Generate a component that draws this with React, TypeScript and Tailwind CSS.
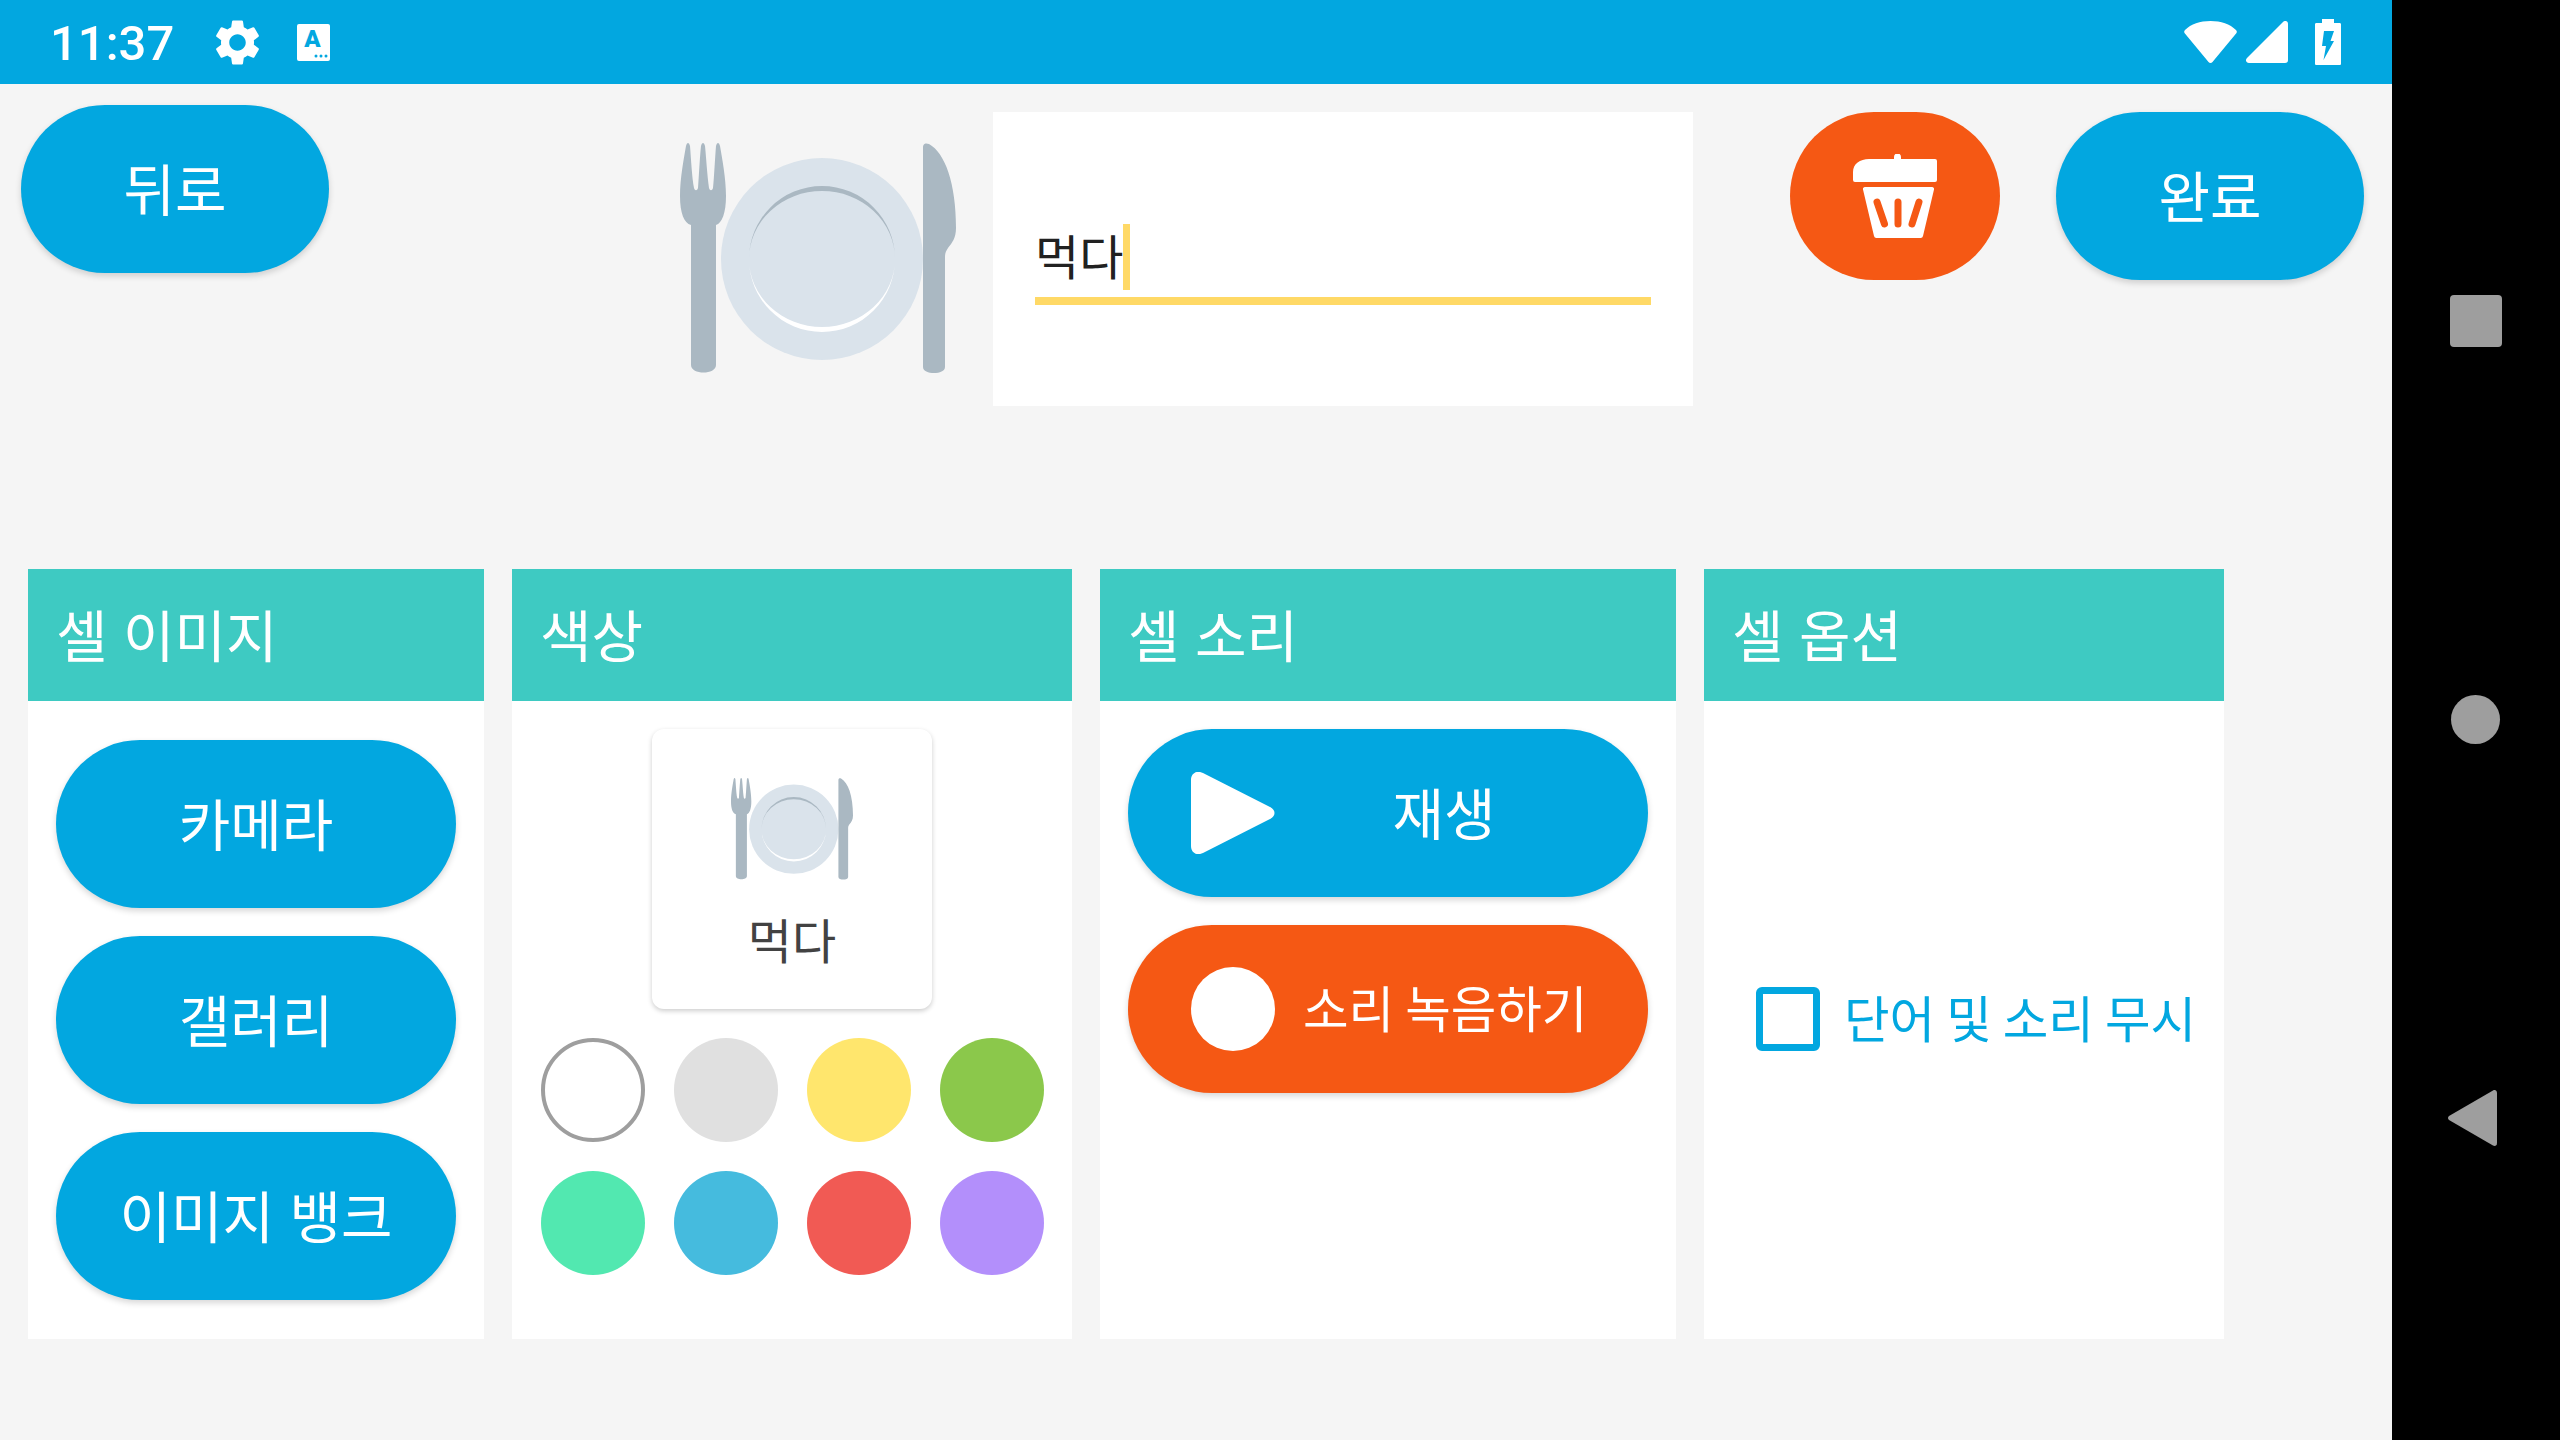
const FONT = "font-['Noto_Sans_CJK_KR','Noto_Sans',sans-serif]";

function PlateIcon({ className }: { className: string }) {
  return (
    <svg viewBox="0 0 276 231" className={className} preserveAspectRatio="none">
      <circle cx="142" cy="116" r="101" fill="#DAE3EB" />
      <path d="M69 116A73 73 0 0 1 215 116A73 68 0 0 0 69 116Z" fill="#AAB8C2" />
      <path d="M69 116A73 73 0 0 0 215 116A73 68 0 0 1 69 116Z" fill="#FFFFFF" />
      <path
        d="M11 82C4 80 0 70 0 53C0 35 4 15 6 3C7-1 9-1 10 3C11 15 12 35 14 45C15 48 17 48 18 45C19 30 20 12 21 3C22-1 24-1 25 3C26 12 27 30 29 45C30 48 32 48 33 45C34 35 35 15 36 3C37-1 39-1 40 3C42 15 46 35 46 53C46 70 42 80 36 82L36 222C36 232 11 232 11 222Z"
        fill="#AAB8C2"
      />
      <path
        d="M243 5C243 0 246 0 249 1C265 10 276 40 276 85C276 95 272 100 268 105C266 108 265 110 265 114L265 224C265 232 243 232 243 224Z"
        fill="#AAB8C2"
      />
    </svg>
  );
}

function TrashIcon() {
  return (
    <svg viewBox="0 0 84 84" className="w-[84px] h-[84px]">
      <path d="M41 6V3a3.500 3.500 0 0 1 7 0V5H82a2 2 0 0 1 2 2V26a2 2 0 0 1-2 2H2a2 2 0 0 1-2-2V18C0 10 7 5 16 5H41Z" fill="#fff" />
      <path d="M12 33H79a2 2 0 0 1 2 2.500L70 82a2.500 2.500 0 0 1-2.500 2H23.500A2.500 2.500 0 0 1 21 82L10 35.500A2 2 0 0 1 12 33Z" fill="#fff" />
      <path d="M24 48L31.500 70M45 48V70M66 48L59 70" stroke="#F55814" strokeWidth="7" strokeLinecap="round" />
    </svg>
  );
}

function StatusBar() {
  return (
    <div className="h-[84px] bg-[#02A7E0] flex items-center pl-[50px] pr-[51px] text-white">
      <span className="font-['Roboto',sans-serif] font-medium text-[49px] leading-none pt-[3px]">11:37</span>
      <svg viewBox="0 0 24 24" className="w-[55px] h-[55px] ml-[36px]" fill="#fff">
        <path d="M19.14 12.94c.04-.3.06-.61.06-.94 0-.32-.02-.64-.07-.94l2.03-1.58c.18-.14.23-.41.12-.61l-1.92-3.32c-.12-.22-.37-.29-.59-.22l-2.39.96c-.5-.38-1.03-.7-1.62-.94l-.36-2.54c-.04-.24-.24-.41-.48-.41h-3.84c-.24 0-.43.17-.47.41l-.36 2.54c-.59.24-1.13.57-1.62.94l-2.39-.96c-.22-.08-.47 0-.59.22L2.74 8.87c-.12.21-.08.47.12.61l2.03 1.58c-.05.3-.09.63-.09.94s.02.64.07.94l-2.03 1.58c-.18.14-.23.41-.12.61l1.92 3.32c.12.22.37.29.59.22l2.39-.96c.5.38 1.03.7 1.62.94l.36 2.54c.05.24.24.41.48.41h3.84c.24 0 .44-.17.47-.41l.36-2.54c.59-.24 1.13-.56 1.62-.94l2.39.96c.22.08.47 0 .59-.22l1.92-3.32c.12-.22.07-.47-.12-.61l-2.01-1.58zM12 15.6c-1.98 0-3.6-1.62-3.6-3.6s1.62-3.6 3.6-3.6 3.6 1.62 3.6 3.6-1.62 3.6-3.6 3.6z" />
      </svg>
      <svg viewBox="0 0 33 37" className="w-[33px] h-[37px] ml-[32px]">
        <rect width="33" height="37" rx="2" fill="#fff" />
        <text x="15.500" y="23" textAnchor="middle" fontFamily="Roboto, sans-serif" fontWeight="900" fontSize="24" fill="#02A7E0">A</text>
        <circle cx="19" cy="32" r="1.500" fill="#02A7E0" />
        <circle cx="24" cy="32" r="1.500" fill="#02A7E0" />
        <circle cx="29" cy="32" r="1.500" fill="#02A7E0" />
      </svg>
      <div className="flex-1" />
      <svg viewBox="0 0 53 42" className="w-[53px] h-[42px]" fill="#fff">
        <path d="M1 9C7 3 16 0 26.500 0S46 3 52 9C53 10 53 11 52.500 12L28.500 41C27.500 42.300 25.500 42.300 24.500 41L.5 12C0 11 0 10 1 9Z" />
      </svg>
      <svg viewBox="0 0 42 42" className="w-[42px] h-[42px] ml-[9px]" fill="#fff">
        <path d="M37 1C39 -1 42 0 42 3V39C42 41 41 42 39 42H3C0 42 -1 39 1 37Z" />
      </svg>
      <svg viewBox="0 0 26 46" className="w-[26px] h-[46px] ml-[27px]">
        <path d="M7 0H19V4H24.500C25.500 4 26 4.500 26 5.500V44.500C26 45.500 25.500 46 24.500 46H1.500C.5 46 0 45.500 0 44.500V5.500C0 4.500 .5 4 1.500 4H7Z" fill="#fff" />
        <path d="M9 12H19L15.500 22H19L8.500 41L11 27H7Z" fill="#02A7E0" />
      </svg>
    </div>
  );
}

function PillButton({ label, className }: { label: string; className: string }) {
  return (
    <div className={`h-[168px] rounded-[84px] bg-[#02A7E0] text-white text-[56px] [word-spacing:3px] pb-[5px] flex items-center justify-center shadow-[0_3px_6px_rgba(0,0,0,0.16)] ${className}`}>
      {label}
    </div>
  );
}

function Panel({ title, width, children }: { title: string; width: string; children: React.ReactNode }) {
  return (
    <div className={`${width} h-[770px] bg-white flex flex-col`}>
      <div className="h-[132px] bg-[#3ECAC2] text-white text-[56px] [word-spacing:3px] leading-none pb-[4px] flex items-center pl-[28px]">{title}</div>
      {children}
    </div>
  );
}

const swatches = [
  "bg-white border-[4px] border-[#9E9E9E]",
  "bg-[#E0E0E0]",
  "bg-[#FFE66D]",
  "bg-[#8BC84B]",
  "bg-[#52E8B0]",
  "bg-[#45BBDE]",
  "bg-[#F15A54]",
  "bg-[#B38FFB]",
];

export default function App() {
  return (
    <div className={`w-[2560px] h-[1440px] flex bg-black overflow-hidden ${FONT}`}>
      <div className="w-[2392px] h-full bg-[#F5F5F5]">
        <StatusBar />

        <div className="flex items-start pt-[21px] pl-[21px] h-[322px]">
          <PillButton label="뒤로" className="w-[308px]" />
          <PlateIcon className="w-[276px] h-[231px] ml-[351px] mt-[38px]" />
          <div className="w-[700px] h-[294px] ml-[37px] mt-[7px] bg-white pt-[112px] pl-[42px]">
            <div className="w-[616px] h-[81px] border-b-[8px] border-[#FFD966] flex items-start text-[48px] leading-[60px] text-[#212121]">
              먹다
              <span className="w-[7px] h-[66px] bg-[#FFD966]" />
            </div>
          </div>
          <div className="w-[210px] h-[168px] ml-[97px] mt-[7px] rounded-[84px] bg-[#F55814] flex items-center justify-center">
            <TrashIcon />
          </div>
          <PillButton label="완료" className="w-[308px] ml-[56px] mt-[7px]" />
        </div>

        <div className="flex gap-[28px] ml-[28px] mt-[163px]">
          <Panel title="셀 이미지" width="w-[456px]">
            <div className="flex flex-col gap-[28px] px-[28px] pt-[39px]">
              <PillButton label="카메라" className="w-full" />
              <PillButton label="갤러리" className="w-full" />
              <PillButton label="이미지 뱅크" className="w-full" />
            </div>
          </Panel>

          <Panel title="색상" width="w-[560px]">
            <div className="flex flex-col items-center pt-[28px]">
              <div className="w-[280px] h-[280px] rounded-[12px] bg-white shadow-[0_2px_5px_rgba(0,0,0,0.2)] flex flex-col items-center pt-[49px]">
                <PlateIcon className="w-[122px] h-[102px]" />
                <span className="mt-[23px] text-[48px] leading-[70px] text-[#424242]">먹다</span>
              </div>
              <div className="grid grid-cols-4 gap-x-[29px] gap-y-[29px] mt-[29px]">
                {swatches.map((swatch) => (
                  <div key={swatch} className={`w-[104px] h-[104px] rounded-full ${swatch}`} />
                ))}
              </div>
            </div>
          </Panel>

          <Panel title="셀 소리" width="w-[576px]">
            <div className="flex flex-col gap-[28px] px-[28px] pt-[28px]">
              <div className="h-[168px] rounded-[84px] bg-[#02A7E0] text-white text-[56px] flex items-center pl-[63px] shadow-[0_3px_6px_rgba(0,0,0,0.16)]">
                <svg viewBox="0 0 84 82" className="w-[84px] h-[82px] shrink-0">
                  <path d="M0 8C0 1 6 -2 12 1L79 35C85 38 85 44 79 47L12 81C6 84 0 81 0 74Z" fill="#fff" />
                </svg>
                <span className="flex-1 text-center pl-[28px] pr-[63px] pb-[5px]">재생</span>
              </div>
              <div className="h-[168px] rounded-[84px] bg-[#F55814] text-white text-[49.5px] flex items-center pl-[63px] shadow-[0_3px_6px_rgba(0,0,0,0.16)]">
                <div className="w-[84px] h-[84px] rounded-full bg-white shrink-0" />
                <span className="ml-[28px] pb-[3px] whitespace-nowrap">소리 녹음하기</span>
              </div>
            </div>
          </Panel>

          <Panel title="셀 옵션" width="w-[520px]">
            <div className="flex items-center pl-[52px] pt-[284px]">
              <div className="w-[64px] h-[64px] rounded-[6px] border-[7px] border-[#02A7E0] shrink-0" />
              <span className="ml-[24px] pb-[4px] text-[49.5px] leading-[64px] text-[#02A7E0] whitespace-nowrap">단어 및 소리 무시</span>
            </div>
          </Panel>
        </div>
      </div>

      <div className="flex-1 flex flex-col items-center pt-[295px]">
        <div className="w-[52px] h-[52px] rounded-[4px] bg-[#9E9E9E]" />
        <div className="w-[49px] h-[49px] rounded-full bg-[#9E9E9E] mt-[348px] mr-[2px]" />
        <svg viewBox="0 0 49 56" className="w-[49px] h-[56px] mt-[346px] mr-[8px]" fill="#9E9E9E">
          <path d="M1 26L45 .5C47 -.5 49 .5 49 3V53C49 55.500 47 56.500 45 55.500L1 30C-.3 29 -.3 27 1 26Z" />
        </svg>
      </div>
    </div>
  );
}
